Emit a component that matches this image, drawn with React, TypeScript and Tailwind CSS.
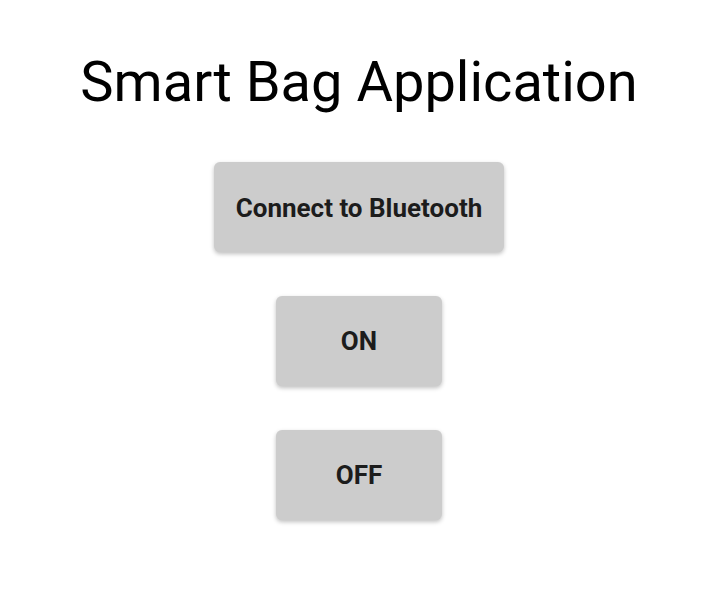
export default function App() {
  return (
    <div className="w-[718px] h-[611px] bg-white flex flex-col items-center font-['Roboto',sans-serif]">
      <h1 className="mt-[49px] text-[56px] leading-[66px] text-black font-normal">Smart Bag Application</h1>
      <div className="mt-[47px] flex flex-col items-center gap-[44px]">
        <button className="w-[290px] h-[90px] rounded-[6px] bg-[#cccccc] shadow-[0_2px_4px_rgba(0,0,0,0.25)] text-[26px] font-bold text-[#1c1c1c] pt-[2px]">
          Connect to Bluetooth
        </button>
        <button className="w-[166px] h-[90px] rounded-[6px] bg-[#cccccc] shadow-[0_2px_4px_rgba(0,0,0,0.25)] text-[26px] font-bold text-[#1c1c1c]">
          ON
        </button>
        <button className="w-[166px] h-[90px] rounded-[6px] bg-[#cccccc] shadow-[0_2px_4px_rgba(0,0,0,0.25)] text-[26px] font-bold text-[#1c1c1c]">
          OFF
        </button>
      </div>
    </div>
  );
}
